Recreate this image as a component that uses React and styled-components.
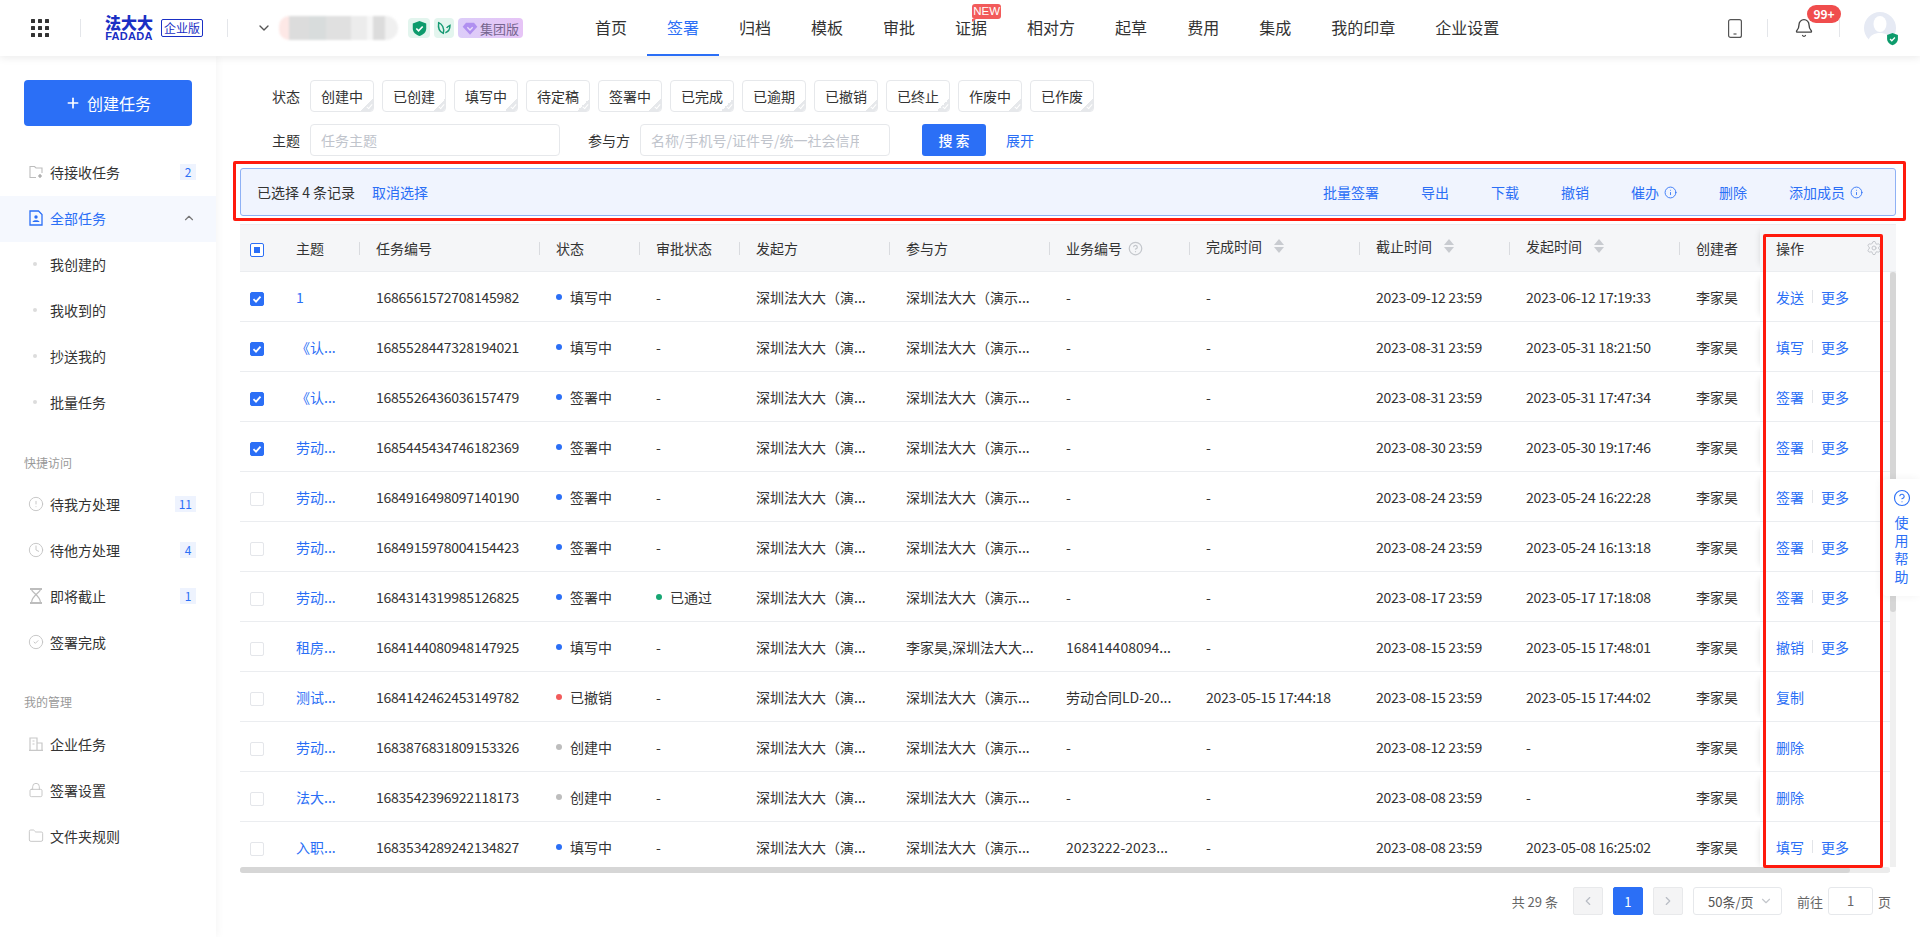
import React from "react";
import styled, { createGlobalStyle } from "styled-components";
import {
    Bell,
    ChevronDown,
    ChevronLeft,
    ChevronRight,
    ChevronUp,
    CircleAlert,
    CircleCheck,
    CircleHelp,
    Clock,
    Folder,
    Info,
    Lock,
    Plus,
    Settings,
} from "lucide-react";

const BLUE = "#2b6ff6";
const TEXT = "#333333";

const GlobalStyle = createGlobalStyle`
    html, body {
        margin: 0;
        padding: 0;
        height: 100%;
        overflow: hidden;
        background: #ffffff;
    }
    body {
        font-family: "Noto Sans CJK SC", "Noto Sans", sans-serif;
        font-size: 14px;
        color: ${TEXT};
    }
    * {
        box-sizing: border-box;
    }
`;

const Page = styled.div`
    position: relative;
    width: 1920px;
    height: 937px;
    overflow: hidden;
`;

/* header */

const Header = styled.header`
    position: relative;
    z-index: 3;
    display: flex;
    align-items: center;
    height: 56px;
    padding: 0 24px 0 31px;
    background: #ffffff;
    box-shadow: 0 2px 8px rgba(0, 0, 0, 0.08);
`;

const GridButton = styled.svg`
    flex: none;
    width: 18px;
    height: 18px;
    margin-right: 31px;
`;

const HeaderDivider = styled.span`
    flex: none;
    width: 1px;
    height: 18px;
    background: #e4e6ea;
`;

const Logo = styled.div`
    flex: none;
    width: 48px;
    margin-left: 24px;
    color: #1a2fc4;
    font-weight: 900;
    text-align: center;
`;

const LogoCn = styled.div`
    height: 15px;
    font-size: 16px;
    line-height: 15px;
`;

const LogoEn = styled.div`
    height: 10px;
    margin-top: 1px;
    font-family: "Liberation Sans", sans-serif;
    font-size: 11px;
    line-height: 10px;
    letter-spacing: 0.3px;
`;

const EditionBox = styled.span`
    flex: none;
    width: 42px;
    height: 18px;
    margin: 0 24px 0 8px;
    border: 1px solid #1a2fc4;
    border-radius: 2px;
    color: #1a2fc4;
    font-size: 12px;
    line-height: 15px;
    text-align: center;
`;

const OrgChevron = styled(ChevronDown)`
    flex: none;
    width: 16px;
    height: 16px;
    margin: 0 7px 0 28px;
    color: #555555;
`;

const BlurredName = styled.div`
    flex: none;
    width: 119px;
    height: 24px;
    border-radius: 10px 12px 12px 10px;
    filter: blur(1px);
    background: linear-gradient(
        90deg,
        #fde8e6 0 10px,
        #dcdcdc 10px 30px,
        #d8dcdc 30px 47px,
        #e0e0e0 47px 72px,
        #ececec 72px 88px,
        #f6f6f6 88px 94px,
        #dcdcdc 94px 106px,
        #f0f0f0 106px 119px
    );
`;

const Chip = styled.span`
    flex: none;
    display: flex;
    align-items: center;
    justify-content: center;
    height: 20px;
    width: ${props => props.$width}px;
    margin-left: ${props => props.$gap}px;
    border-radius: 4px;
    background: ${props => props.$bg};
`;

const GroupChip = styled(Chip)`
    gap: 2px;
    color: #75658f;
    font-size: 13px;
`;

const Nav = styled.nav`
    display: flex;
    align-self: stretch;
    margin-left: 52px;
`;

const NavItem = styled.a`
    position: relative;
    display: flex;
    align-items: center;
    padding: 0 20px;
    font-size: 16px;
    color: ${props => (props.$active ? BLUE : TEXT)};
    border-bottom: 2px solid ${props => (props.$active ? BLUE : "transparent")};
`;

const NewBadge = styled.span`
    position: absolute;
    left: 37px;
    top: 4px;
    width: 29px;
    height: 15px;
    border-radius: 3px;
    background: #f25b5b;
    color: #ffffff;
    font-family: "Liberation Sans", sans-serif;
    font-size: 11.5px;
    line-height: 15px;
    text-align: center;

    &::after {
        content: "";
        position: absolute;
        left: 0;
        bottom: -3px;
        border-top: 3px solid #f25b5b;
        border-right: 4px solid transparent;
    }
`;

const HeaderRight = styled.div`
    display: flex;
    align-items: center;
    margin-left: auto;
`;

const PhoneIcon = styled.svg`
    width: 14px;
    height: 19px;
    margin-right: 25px;
`;

const BellWrap = styled.div`
    position: relative;
    display: flex;
    width: 20px;
    margin: 0 25px 0 26px;
    color: #444444;
`;

const CountBadge = styled.span`
    position: absolute;
    left: 13px;
    top: -13px;
    width: 34px;
    height: 18px;
    border-radius: 9px;
    background: #f04d4d;
    color: #ffffff;
    font-size: 12px;
    font-weight: 700;
    line-height: 18px;
    text-align: center;
`;

const AvatarWrap = styled.div`
    position: relative;
    width: 32px;
    height: 32px;
    margin-left: 24px;
`;

const AvatarShield = styled.svg`
    position: absolute;
    right: -3px;
    bottom: -2px;
    width: 13px;
    height: 14px;
`;

/* sidebar */

const Body = styled.div`
    display: flex;
    height: 881px;
`;

const Sidebar = styled.aside`
    flex: none;
    width: 216px;
    padding-top: 24px;
    background: #ffffff;
    box-shadow: 2px 0 8px rgba(0, 0, 0, 0.04);
`;

const CreateButton = styled.button`
    display: flex;
    align-items: center;
    justify-content: center;
    gap: 6px;
    width: 168px;
    height: 46px;
    margin: 0 24px 24px;
    border: none;
    border-radius: 4px;
    background: ${BLUE};
    color: #ffffff;
    font-family: inherit;
    font-size: 16px;
`;

const MenuItem = styled.div`
    display: flex;
    align-items: center;
    height: 46px;
    padding: 0 20px 2px 29px;
    color: ${props => (props.$active ? BLUE : TEXT)};
    background: ${props => (props.$active ? "#f5f8fe" : "transparent")};

    svg {
        flex: none;
    }
`;

const MenuIcon = styled.span`
    flex: none;
    display: flex;
    width: 14px;
    margin-right: 7px;
    color: #bdbdbd;
`;

const MenuLabel = styled.span`
    flex: 1;
`;

const MenuBadge = styled.span`
    min-width: 16px;
    height: 16px;
    padding: 0 4px;
    background: #eef3fe;
    color: ${BLUE};
    font-size: 12px;
    line-height: 16px;
    text-align: center;
`;

const SubItem = styled.div`
    display: flex;
    align-items: center;
    height: 46px;
    padding: 0 0 2px 33px;

    &::before {
        content: "";
        width: 4px;
        height: 4px;
        margin-right: 13px;
        border-radius: 50%;
        background: #dcdcdc;
    }
`;

const MenuSection = styled.div`
    height: 20px;
    margin: ${props => props.$top}px 0 ${props => props.$bottom}px;
    padding-left: 24px;
    color: #999999;
    font-size: 12px;
    line-height: 20px;
`;

const SmallIcon = styled.span`
    display: flex;
    margin: 0 -1px;
    color: #c4c4c4;
`;

/* main */

const Main = styled.main`
    flex: none;
    width: 1704px;
    padding: 24px 24px 0;
`;

const FilterRow = styled.div`
    display: flex;
    align-items: center;
    height: 32px;
    margin-bottom: 12px;
    padding-left: 32px;
`;

const FilterLabel = styled.label`
    flex: none;
    margin-right: ${props => props.$gap || 10}px;
`;

const Tag = styled.span`
    position: relative;
    overflow: hidden;
    flex: none;
    width: 64px;
    height: 32px;
    margin-right: 8px;
    border: 1px solid #e6e8eb;
    border-radius: 4px;
    line-height: 30px;
    text-align: center;

    &::after {
        content: "";
        position: absolute;
        right: 0;
        bottom: 0;
        width: 12px;
        height: 12px;
        background: linear-gradient(135deg, transparent 50%, #e6e8eb 50%);
    }

    &::before {
        content: "";
        position: absolute;
        z-index: 1;
        right: 2px;
        bottom: 2px;
        width: 2px;
        height: 5px;
        border-right: 1px solid #ffffff;
        border-bottom: 1px solid #ffffff;
        transform: rotate(40deg);
    }
`;

const TextInput = styled.div`
    flex: none;
    width: ${props => props.$width}px;
    height: 32px;
    margin-right: ${props => props.$gap}px;
    padding: 0 10px;
    border: 1px solid #e6e8eb;
    border-radius: 4px;
    color: #c0c4cc;
    line-height: 30px;
`;

const Placeholder = styled.div`
    overflow: hidden;
    width: 208px;
    white-space: nowrap;
`;

const SearchButton = styled.button`
    flex: none;
    width: 64px;
    height: 32px;
    margin-right: 20px;
    border: none;
    border-radius: 3px;
    background: ${BLUE};
    color: #ffffff;
    font-family: inherit;
    font-size: 14px;
    font-weight: 500;
    white-space: pre;
`;

const TextLink = styled.a`
    color: ${BLUE};
`;

const SelectionBar = styled.div`
    position: relative;
    display: flex;
    align-items: center;
    height: 48px;
    margin-bottom: 8px;
    padding: 0 32px 0 16px;
    border: 1px solid #8fb1f5;
    border-radius: 3px;
    background: #f0f4fe;
`;

const SelectionText = styled.span`
    margin-right: 17px;
`;

const SelectionActions = styled.div`
    display: flex;
    gap: 42px;
    margin-left: auto;
`;

const ActionLink = styled.a`
    display: flex;
    align-items: center;
    gap: 5px;
    color: ${BLUE};
`;

const RedMark = styled.div`
    position: absolute;
    pointer-events: none;
    border: 3px solid #ff1a0d;
    border-radius: 2px;
`;

const BarMark = styled(RedMark)`
    left: -8px;
    top: -8px;
    width: 1673px;
    height: 60px;
`;

const ColumnMark = styled(RedMark)`
    z-index: 2;
    left: 1523px;
    top: 10px;
    width: 120px;
    height: 634px;
`;

/* table */

const columns = "40px 80px 180px 100px 100px 150px 160px 140px 170px 150px 170px 80px 130px";

const Table = styled.div`
    position: relative;
    width: 1656px;
    height: 649px;
    overflow: hidden;
`;

const HeadRow = styled.div`
    display: grid;
    grid-template-columns: ${columns};
    height: 48px;
    border-top: 1px solid #ebedf0;
    border-bottom: 1px solid #ebedf0;
    background: #f5f6f8;
`;

const BodyRow = styled.div`
    display: grid;
    grid-template-columns: ${columns};
    width: 1650px;
    height: 50px;
    border-bottom: 1px solid #ebedf0;
`;

const HeadCell = styled.div`
    position: relative;
    display: flex;
    align-items: center;
    gap: 6px;
    padding-left: 16px;

    &::after {
        content: ${props => (props.$noLine ? "none" : '""')};
        position: absolute;
        right: 0;
        top: 17px;
        width: 1px;
        height: 13px;
        background: #d9dbdf;
    }
`;

const CheckHead = styled(HeadCell)`
    padding-left: 10px;
`;

const FixedHead = styled(HeadCell)`
    justify-content: space-between;
    padding-right: 8px;
    background: #f5f6f8;
    box-shadow: -6px 0 6px -6px rgba(0, 0, 0, 0.12);
`;

const Cell = styled.div`
    display: flex;
    align-items: center;
    overflow: hidden;
    padding-left: 16px;
    white-space: nowrap;
    letter-spacing: ${props => (props.$digits ? "-0.24px" : "0")};
    color: ${props => (props.$link ? BLUE : TEXT)};
`;

const CheckCell = styled(Cell)`
    padding-left: 10px;
`;

const FixedCell = styled(Cell)`
    position: relative;
    overflow: visible;
    gap: 8px;
    color: ${BLUE};
    background: #ffffff;
    box-shadow: -6px 0 6px -6px rgba(0, 0, 0, 0.12);
`;

const OpDivider = styled.span`
    width: 1px;
    height: 13px;
    background: #e2e4e8;
`;

const CheckBox = styled.span`
    position: relative;
    display: flex;
    align-items: center;
    justify-content: center;
    width: 14px;
    height: 14px;
    margin-top: 4px;
    border: 1px solid ${props => (props.$on ? BLUE : "#e4e6ea")};
    border-radius: 2px;
    background: ${props => (props.$on && !props.$partial ? BLUE : "#ffffff")};
`;

const PartialMark = styled.span`
    width: 6px;
    height: 6px;
    background: ${BLUE};
`;

const Status = styled.span`
    display: flex;
    align-items: center;
    gap: 8px;

    &::before {
        content: "";
        width: 6px;
        height: 6px;
        border-radius: 50%;
        background: ${props => props.$color};
    }
`;

const SortArrows = styled.span`
    display: flex;
    flex-direction: column;
    gap: 2px;
    margin-left: 6px;
    margin-top: -5px;

    &::before,
    &::after {
        content: "";
        width: 0;
        height: 0;
        border-left: 5px solid transparent;
        border-right: 5px solid transparent;
    }

    &::before {
        border-bottom: 6px solid #c8cbd0;
    }

    &::after {
        border-top: 6px solid #c8cbd0;
    }
`;

const SortTitle = styled.span`
    margin-top: -5px;
`;

const HScroll = styled.div`
    position: absolute;
    left: 0;
    bottom: 0;
    width: 1650px;
    height: 6px;
    border-radius: 3px;
    background: #ececec;

    &::after {
        content: "";
        display: block;
        width: 1610px;
        height: 6px;
        border-radius: 3px;
        background: #d6d6d6;
    }
`;

const VScroll = styled.div`
    position: absolute;
    right: 0;
    top: 48px;
    width: 6px;
    height: 595px;
    background: #f0f0f0;

    &::after {
        content: "";
        display: block;
        width: 6px;
        height: 340px;
        border-radius: 3px;
        background: #d6d6d6;
    }
`;

/* pagination */

const Pager = styled.div`
    display: flex;
    align-items: center;
    justify-content: flex-end;
    width: 1651px;
    height: 28px;
    margin-top: 14px;
    color: #666666;
    font-size: 13px;
`;

const PageTotal = styled.span`
    margin-right: 15px;
`;

const PageButton = styled.span`
    display: flex;
    align-items: center;
    justify-content: center;
    width: 30px;
    height: 28px;
    margin-right: 10px;
    border: 1px solid ${props => (props.$active ? BLUE : "#e8e9eb")};
    border-radius: 2px;
    background: ${props => (props.$active ? BLUE : "#f4f4f5")};
    color: ${props => (props.$active ? "#ffffff" : "#b8bcc4")};
`;

const PageSelect = styled.span`
    display: flex;
    align-items: center;
    justify-content: space-between;
    width: 89px;
    height: 28px;
    margin-right: 15px;
    padding: 0 8px 0 14px;
    border: 1px solid #e6e8eb;
    border-radius: 3px;
    color: #555555;
`;

const PageInput = styled.span`
    width: 45px;
    height: 28px;
    margin: 0 5px;
    border: 1px solid #e6e8eb;
    border-radius: 3px;
    line-height: 26px;
    text-align: center;
`;

/* help */

const HelpPanel = styled.div`
    position: absolute;
    z-index: 3;
    right: 0;
    top: 479px;
    display: flex;
    flex-direction: column;
    align-items: center;
    width: 37px;
    height: 117px;
    padding-top: 10px;
    border-radius: 4px 0 0 4px;
    background: #ffffff;
    box-shadow: -2px 0 8px rgba(0, 0, 0, 0.06);
    color: ${BLUE};
`;

const HelpText = styled.span`
    width: 14px;
    margin-top: 6px;
    line-height: 18px;
    word-break: break-all;
`;

/* drawings */

const ShieldIcon = ({ size = 17, fill = "#0d9b6c" }) => (
    <svg width={size} height={size} viewBox="0 0 24 24">
        <path d="M12 1.5 21.5 5v7c0 5.4-4 8.9-9.5 10.5C6.5 20.9 2.5 17.4 2.5 12V5z" fill={fill} />
        <path d="M7.5 12l3.2 3.2 5.8-6" fill="none" stroke="#ffffff" strokeWidth="2.4" />
    </svg>
);

const LeafIcon = () => (
    <svg width="16" height="16" viewBox="0 0 24 24" fill="none" stroke="#169a73" strokeWidth="2.2">
        <path d="M11 20C5 18 3 11 4 4c5 2 9 8 7 16z" />
        <path d="M14 19c4-1 7-5 7-11-2 1-4 2-5 4" />
    </svg>
);

const DiamondIcon = () => (
    <svg width="16" height="16" viewBox="0 0 24 24">
        <path d="M6 4h12l5 6-11 12L1 10z" fill="#b08ff0" />
        <path d="M8 11l4 4 4-4" fill="none" stroke="#e9dcfb" strokeWidth="2" />
    </svg>
);

const InboxIcon = () => (
    <svg width="14" height="14" viewBox="0 0 14 14" fill="none" stroke="#bdbdbd" strokeWidth="1.1">
        <path d="M7 12.5H1V1.5h4.5l1.5 1.5h6v5" />
        <path d="M11 9v4M9 11h4" stroke="#9a9a9a" />
    </svg>
);

const TaskDocIcon = () => (
    <svg width="14" height="16" viewBox="0 0 14 16" fill="none" stroke={BLUE} strokeWidth="1.3">
        <path d="M1 1h8.5L13 4.5V15H1z" />
        <circle cx="7" cy="7" r="1.7" fill={BLUE} stroke="none" />
        <path d="M3.5 12c0-2.3 7-2.3 7 0z" fill={BLUE} stroke="none" />
    </svg>
);

const HourglassIcon = () => (
    <svg width="14" height="16" viewBox="0 0 14 16" fill="none" stroke="#bdbdbd" strokeWidth="1.3">
        <path d="M1 1h12M1 15h12" strokeWidth="1.8" />
        <path d="M2.5 1c0 4 9 6 9 14M11.5 1c0 4-9 6-9 14" />
    </svg>
);

const BuildingIcon = () => (
    <svg width="14" height="14" viewBox="0 0 14 14" fill="none" stroke="#c8c8c8" strokeWidth="1.2">
        <path d="M1 13V1h7v12M8 6h5v7M0 13.3h14" />
        <path d="M3.5 4h2M3.5 7h2" />
    </svg>
);

const Check = () => (
    <svg width="10" height="10" viewBox="0 0 10 10" fill="none" stroke="#ffffff" strokeWidth="1.8">
        <path d="M1.5 5.2 4 7.7l4.5-5" />
    </svg>
);

const menuIcon = (Icon) => (
    <SmallIcon>
        <Icon size={16} strokeWidth={1.4} />
    </SmallIcon>
);

/* data */

const statusColor = {
    填写中: BLUE,
    签署中: BLUE,
    已撤销: "#f25b5b",
    创建中: "#bdbdbd",
};

const ORG = "深圳法大大（演...";
const PARTY = "深圳法大大（演示...";

const rows = [
    { on: true, title: "1", no: "1686561572708145982", status: "填写中", end: "2023-09-12 23:59", start: "2023-06-12 17:19:33", op: "发送" },
    { on: true, title: "《认...", no: "1685528447328194021", status: "填写中", end: "2023-08-31 23:59", start: "2023-05-31 18:21:50", op: "填写" },
    { on: true, title: "《认...", no: "1685526436036157479", status: "签署中", end: "2023-08-31 23:59", start: "2023-05-31 17:47:34", op: "签署" },
    { on: true, title: "劳动...", no: "1685445434746182369", status: "签署中", end: "2023-08-30 23:59", start: "2023-05-30 19:17:46", op: "签署" },
    { title: "劳动...", no: "1684916498097140190", status: "签署中", end: "2023-08-24 23:59", start: "2023-05-24 16:22:28", op: "签署" },
    { title: "劳动...", no: "1684915978004154423", status: "签署中", end: "2023-08-24 23:59", start: "2023-05-24 16:13:18", op: "签署" },
    { title: "劳动...", no: "1684314319985126825", status: "签署中", approval: "已通过", end: "2023-08-17 23:59", start: "2023-05-17 17:18:08", op: "签署" },
    { title: "租房...", no: "1684144080948147925", status: "填写中", party: "李家昊,深圳法大大...", biz: "168414408094...", end: "2023-08-15 23:59", start: "2023-05-15 17:48:01", op: "撤销" },
    { title: "测试...", no: "1684142462453149782", status: "已撤销", biz: "劳动合同LD-20...", done: "2023-05-15 17:44:18", end: "2023-08-15 23:59", start: "2023-05-15 17:44:02", op: "复制", single: true },
    { title: "劳动...", no: "1683876831809153326", status: "创建中", end: "2023-08-12 23:59", op: "删除", single: true },
    { title: "法大...", no: "1683542396922118173", status: "创建中", end: "2023-08-08 23:59", op: "删除", single: true },
    { title: "入职...", no: "1683534289242134827", status: "填写中", biz: "2023222-2023...", end: "2023-08-08 23:59", start: "2023-05-08 16:25:02", op: "填写" },
];

const navItems = ["首页", "签署", "归档", "模板", "审批", "证据", "相对方", "起草", "费用", "集成", "我的印章", "企业设置"];
const statusTags = ["创建中", "已创建", "填写中", "待定稿", "签署中", "已完成", "已逾期", "已撤销", "已终止", "作废中", "已作废"];

const App = () => {
    return (
        <Page>
            <GlobalStyle />
            <Header>
                <GridButton viewBox="0 0 18 18" fill="#333333">
                    {[0, 7, 14].map(y =>
                        [0, 7, 14].map(x => <rect key={`${x}-${y}`} x={x} y={y} width="4" height="4" rx="0.5" />)
                    )}
                </GridButton>
                <HeaderDivider />
                <Logo>
                    <LogoCn>法大大</LogoCn>
                    <LogoEn>FADADA</LogoEn>
                </Logo>
                <EditionBox>企业版</EditionBox>
                <HeaderDivider />
                <OrgChevron />
                <BlurredName />
                <Chip $width={22} $gap={10} $bg="#e3f5ee"><ShieldIcon /></Chip>
                <Chip $width={20} $gap={4} $bg="#e3f5ee"><LeafIcon /></Chip>
                <GroupChip $width={65} $gap={4} $bg="linear-gradient(90deg, #dccdf9, #e6c4f6)"><DiamondIcon />集团版</GroupChip>
                <Nav>
                    {navItems.map(item => (
                        <NavItem key={item} $active={item === "签署"}>
                            {item}
                            {item === "证据" && <NewBadge>NEW</NewBadge>}
                        </NavItem>
                    ))}
                </Nav>
                <HeaderRight>
                    <PhoneIcon viewBox="0 0 14 19" fill="none" stroke="#555555" strokeWidth="1.2">
                        <rect x="0.6" y="0.6" width="12.8" height="17.8" rx="2" />
                        <path d="M5.5 15h3" />
                    </PhoneIcon>
                    <HeaderDivider />
                    <BellWrap>
                        <Bell size={20} strokeWidth={1.6} />
                        <CountBadge>99+</CountBadge>
                    </BellWrap>
                    <HeaderDivider />
                    <AvatarWrap>
                        <svg width="32" height="32" viewBox="0 0 32 32">
                            <circle cx="16" cy="16" r="16" fill="#e6eaf4" />
                            <ellipse cx="16" cy="12" rx="6.5" ry="8" fill="#ffffff" />
                            <path d="M4 30c1-7 7-9 12-9s11 2 12 9c-6 3-18 3-24 0z" fill="#ffffff" />
                        </svg>
                        <AvatarShield viewBox="0 0 24 24">
                            <path d="M12 1 22 4.5V12c0 5.5-4 9.5-10 11.5C6 21.5 2 17.5 2 12V4.5z" fill="#0d9b6c" />
                            <path d="M7.5 12l3.2 3.2 5.8-6" fill="none" stroke="#ffffff" strokeWidth="2.4" />
                        </AvatarShield>
                    </AvatarWrap>
                </HeaderRight>
            </Header>

            <Body>
                <Sidebar>
                    <CreateButton><Plus size={16} strokeWidth={2.5} />创建任务</CreateButton>
                    <MenuItem>
                        <MenuIcon><InboxIcon /></MenuIcon>
                        <MenuLabel>待接收任务</MenuLabel>
                        <MenuBadge>2</MenuBadge>
                    </MenuItem>
                    <MenuItem $active>
                        <MenuIcon><TaskDocIcon /></MenuIcon>
                        <MenuLabel>全部任务</MenuLabel>
                        <ChevronUp size={14} color="#777777" />
                    </MenuItem>
                    <SubItem>我创建的</SubItem>
                    <SubItem>我收到的</SubItem>
                    <SubItem>抄送我的</SubItem>
                    <SubItem>批量任务</SubItem>

                    <MenuSection $top={27} $bottom={9}>快捷访问</MenuSection>
                    <MenuItem>
                        <MenuIcon>{menuIcon(CircleAlert)}</MenuIcon>
                        <MenuLabel>待我方处理</MenuLabel>
                        <MenuBadge>11</MenuBadge>
                    </MenuItem>
                    <MenuItem>
                        <MenuIcon>{menuIcon(Clock)}</MenuIcon>
                        <MenuLabel>待他方处理</MenuLabel>
                        <MenuBadge>4</MenuBadge>
                    </MenuItem>
                    <MenuItem>
                        <MenuIcon><HourglassIcon /></MenuIcon>
                        <MenuLabel>即将截止</MenuLabel>
                        <MenuBadge>1</MenuBadge>
                    </MenuItem>
                    <MenuItem>
                        <MenuIcon>{menuIcon(CircleCheck)}</MenuIcon>
                        <MenuLabel>签署完成</MenuLabel>
                    </MenuItem>

                    <MenuSection $top={26} $bottom={10}>我的管理</MenuSection>
                    <MenuItem>
                        <MenuIcon><BuildingIcon /></MenuIcon>
                        <MenuLabel>企业任务</MenuLabel>
                    </MenuItem>
                    <MenuItem>
                        <MenuIcon>{menuIcon(Lock)}</MenuIcon>
                        <MenuLabel>签署设置</MenuLabel>
                    </MenuItem>
                    <MenuItem>
                        <MenuIcon>{menuIcon(Folder)}</MenuIcon>
                        <MenuLabel>文件夹规则</MenuLabel>
                    </MenuItem>
                </Sidebar>

                <Main>
                    <FilterRow>
                        <FilterLabel>状态</FilterLabel>
                        {statusTags.map(tag => <Tag key={tag}>{tag}</Tag>)}
                    </FilterRow>
                    <FilterRow>
                        <FilterLabel>主题</FilterLabel>
                        <TextInput $width={250} $gap={28}>任务主题</TextInput>
                        <FilterLabel>参与方</FilterLabel>
                        <TextInput $width={250} $gap={32}>
                            <Placeholder>名称/手机号/证件号/统一社会信用代码</Placeholder>
                        </TextInput>
                        <SearchButton>搜 索</SearchButton>
                        <TextLink>展开</TextLink>
                    </FilterRow>

                    <SelectionBar>
                        <SelectionText>已选择 4 条记录</SelectionText>
                        <TextLink>取消选择</TextLink>
                        <SelectionActions>
                            <ActionLink>批量签署</ActionLink>
                            <ActionLink>导出</ActionLink>
                            <ActionLink>下载</ActionLink>
                            <ActionLink>撤销</ActionLink>
                            <ActionLink>催办<Info size={13} strokeWidth={1.6} /></ActionLink>
                            <ActionLink>删除</ActionLink>
                            <ActionLink>添加成员<Info size={13} strokeWidth={1.6} /></ActionLink>
                        </SelectionActions>
                        <BarMark />
                    </SelectionBar>

                    <Table>
                        <HeadRow>
                            <CheckHead $noLine><CheckBox $on $partial><PartialMark /></CheckBox></CheckHead>
                            <HeadCell>主题</HeadCell>
                            <HeadCell>任务编号</HeadCell>
                            <HeadCell>状态</HeadCell>
                            <HeadCell>审批状态</HeadCell>
                            <HeadCell>发起方</HeadCell>
                            <HeadCell>参与方</HeadCell>
                            <HeadCell>业务编号<CircleHelp size={15} color="#c4c7cc" /></HeadCell>
                            <HeadCell><SortTitle>完成时间</SortTitle><SortArrows /></HeadCell>
                            <HeadCell><SortTitle>截止时间</SortTitle><SortArrows /></HeadCell>
                            <HeadCell><SortTitle>发起时间</SortTitle><SortArrows /></HeadCell>
                            <HeadCell $noLine>创建者</HeadCell>
                            <FixedHead $noLine>操作<Settings size={16} strokeWidth={1.5} color="#c4c7cc" /></FixedHead>
                        </HeadRow>
                        {rows.map(row => (
                            <BodyRow key={row.no}>
                                <CheckCell><CheckBox $on={row.on}>{row.on && <Check />}</CheckBox></CheckCell>
                                <Cell $link>{row.title}</Cell>
                                <Cell $digits>{row.no}</Cell>
                                <Cell><Status $color={statusColor[row.status]}>{row.status}</Status></Cell>
                                <Cell>{row.approval ? <Status $color="#17a673">{row.approval}</Status> : "-"}</Cell>
                                <Cell>{ORG}</Cell>
                                <Cell>{row.party || PARTY}</Cell>
                                <Cell>{row.biz || "-"}</Cell>
                                <Cell $digits>{row.done || "-"}</Cell>
                                <Cell $digits>{row.end}</Cell>
                                <Cell $digits>{row.start || "-"}</Cell>
                                <Cell>李家昊</Cell>
                                <FixedCell>
                                    {row.op}
                                    {!row.single && <OpDivider />}
                                    {!row.single && "更多"}
                                </FixedCell>
                            </BodyRow>
                        ))}
                        <HScroll />
                        <VScroll />
                        <ColumnMark />
                    </Table>

                    <Pager>
                        <PageTotal>共 29 条</PageTotal>
                        <PageButton><ChevronLeft size={14} /></PageButton>
                        <PageButton $active>1</PageButton>
                        <PageButton><ChevronRight size={14} /></PageButton>
                        <PageSelect>50条/页<ChevronDown size={14} color="#c4c7cc" /></PageSelect>
                        <span>前往</span>
                        <PageInput>1</PageInput>
                        <span>页</span>
                    </Pager>
                </Main>
            </Body>

            <HelpPanel>
                <CircleHelp size={18} strokeWidth={1.5} />
                <HelpText>使用帮助</HelpText>
            </HelpPanel>
        </Page>
    );
};

export default App;
